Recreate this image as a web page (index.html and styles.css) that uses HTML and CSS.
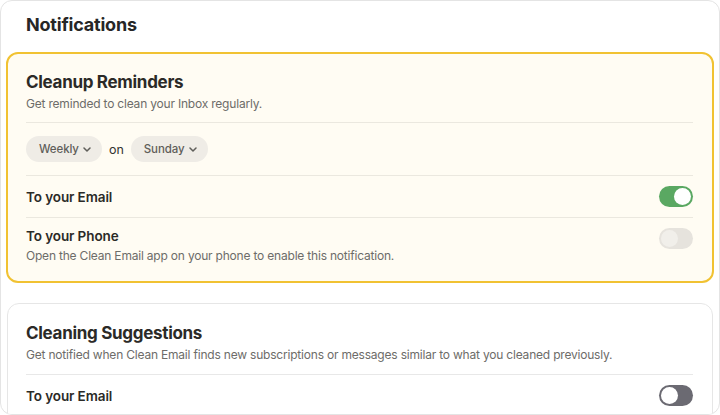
FILE: index.html
```html
<!DOCTYPE html>
<html lang="en">
<head>
<meta charset="utf-8">
<title>Notifications</title>
<link rel="stylesheet" href="styles.css">
</head>
<body>
<div class="panel">
  <h1 class="panel-title">Notifications</h1>

  <section class="card card-active">
    <h2 class="card-title">Cleanup Reminders</h2>
    <p class="card-desc">Get reminded to clean your Inbox regularly.</p>
    <div class="row row-schedule">
      <button class="pill">Weekly
        <svg class="chev" viewBox="0 0 8 5" width="8" height="5"><path d="M1 1l3 3 3-3" fill="none" stroke="currentColor" stroke-width="1.5" stroke-linecap="round" stroke-linejoin="round"/></svg>
      </button>
      <span class="on">on</span>
      <button class="pill">Sunday
        <svg class="chev" viewBox="0 0 8 5" width="8" height="5"><path d="M1 1l3 3 3-3" fill="none" stroke="currentColor" stroke-width="1.5" stroke-linecap="round" stroke-linejoin="round"/></svg>
      </button>
    </div>
    <div class="row row-toggle">
      <span class="row-label">To your Email</span>
      <span class="toggle toggle-on"><span class="knob"></span></span>
    </div>
    <div class="row row-toggle row-top">
      <div class="row-text">
        <span class="row-label">To your Phone</span>
        <span class="row-desc">Open the Clean Email app on your phone to enable this notification.</span>
      </div>
      <span class="toggle toggle-disabled"><span class="knob"></span></span>
    </div>
  </section>

  <section class="card card-plain">
    <h2 class="card-title">Cleaning Suggestions</h2>
    <p class="card-desc">Get notified when Clean Email finds new subscriptions or messages similar to what you cleaned previously.</p>
    <div class="row row-toggle">
      <span class="row-label">To your Email</span>
      <span class="toggle toggle-off"><span class="knob"></span></span>
    </div>
  </section>
</div>
</body>
</html>
```

FILE: styles.css
```css
* { box-sizing: border-box; }
html, body { margin: 0; padding: 0; }
body {
  font-family: Inter, "Noto Sans", "Liberation Sans", sans-serif;
  color: #2a2a2a;
  background: #ffffff;
  width: 720px;
  height: 415px;
  overflow: hidden;
}
.panel {
  width: 720px;
  height: 415px;
  border: 1px solid #e4e4e4;
  border-radius: 12px;
  padding: 0 5px;
  overflow: hidden;
}
.panel-title {
  margin: 0;
  padding: 13px 0 0 20px;
  height: 51px;
  font-size: 18px;
  line-height: 22px;
  font-weight: 700;
  letter-spacing: -0.2px;
  color: #262626;
}
.card {
  border-radius: 12px;
}
.card-active {
  border: 2px solid #f1c232;
  background: #fffcf3;
  padding: 17px 19px 16px 18px;
}
.card-plain {
  margin: 20px 1px 0;
  border: 1px solid #e6e6e6;
  background: #ffffff;
  padding: 18px 19px 20px 18px;
}
.card-title {
  margin: 0;
  font-size: 17px;
  line-height: 22px;
  font-weight: 700;
  letter-spacing: -0.3px;
  color: #2b2a27;
}
.card-desc {
  margin: 2px 0 0;
  font-size: 12px;
  line-height: 18px;
  letter-spacing: -0.2px;
  color: #6d6c69;
  padding-bottom: 9px;
  border-bottom: 1px solid #ebe8df;
}
.card-plain .card-desc { border-bottom-color: #e8e8e8; padding-bottom: 10px; }
.row {
  display: flex;
  align-items: center;
}
.row-schedule {
  padding: 13px 0;
  gap: 7px;
  border-bottom: 1px solid #ebe8df;
}
.pill {
  display: inline-flex;
  align-items: center;
  gap: 4px;
  height: 26px;
  padding: 0 11px 0 13px;
  border: none;
  border-radius: 13px;
  background: #efece6;
  font-family: inherit;
  font-size: 11.5px;
  letter-spacing: -0.1px;
  font-weight: 500;
  color: #5f5e5a;
}
.chev { color: #5f5e5a; }
.on {
  font-size: 12.5px;
  color: #333230;
}
.row-toggle {
  justify-content: space-between;
  height: 41px;
}
.row-toggle + .row-toggle { border-top: 1px solid #ebe8df; }
.row-top {
  height: auto;
  align-items: flex-start;
  padding-top: 8px;
}
.row-text {
  display: flex;
  flex-direction: column;
}
.row-label {
  font-size: 13.5px;
  line-height: 20px;
  font-weight: 600;
  letter-spacing: -0.1px;
  color: #2b2a27;
}
.row-desc {
  font-size: 12px;
  line-height: 19px;
  letter-spacing: -0.2px;
  color: #6d6c69;
}
.toggle {
  position: relative;
  display: inline-block;
  width: 34px;
  height: 21px;
  border-radius: 11px;
  flex: none;
}
.row-top .toggle { margin-top: 2px; }
.knob {
  position: absolute;
  top: 2px;
  width: 17px;
  height: 17px;
  border-radius: 50%;
  background: #ffffff;
}
.toggle-on { background: #5aa862; }
.toggle-on .knob { right: 2px; }
.toggle-disabled { background: #e6e3dd; }
.toggle-disabled .knob { left: 2px; background: #f1efea; }
.toggle-off { background: #6b6a72; }
.toggle-off .knob { left: 2px; }
```
